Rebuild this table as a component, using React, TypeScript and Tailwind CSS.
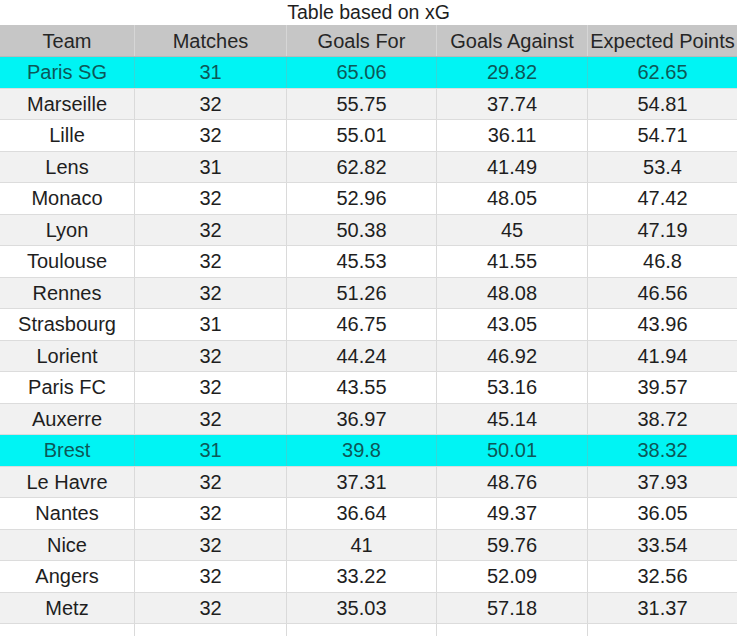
import React from 'react';

type Row = [string, number, number, number, number];

const rows: Row[] = [
  ['Paris SG', 31, 65.06, 29.82, 62.65],
  ['Marseille', 32, 55.75, 37.74, 54.81],
  ['Lille', 32, 55.01, 36.11, 54.71],
  ['Lens', 31, 62.82, 41.49, 53.4],
  ['Monaco', 32, 52.96, 48.05, 47.42],
  ['Lyon', 32, 50.38, 45, 47.19],
  ['Toulouse', 32, 45.53, 41.55, 46.8],
  ['Rennes', 32, 51.26, 48.08, 46.56],
  ['Strasbourg', 31, 46.75, 43.05, 43.96],
  ['Lorient', 32, 44.24, 46.92, 41.94],
  ['Paris FC', 32, 43.55, 53.16, 39.57],
  ['Auxerre', 32, 36.97, 45.14, 38.72],
  ['Brest', 31, 39.8, 50.01, 38.32],
  ['Le Havre', 32, 37.31, 48.76, 37.93],
  ['Nantes', 32, 36.64, 49.37, 36.05],
  ['Nice', 32, 41, 59.76, 33.54],
  ['Angers', 32, 33.22, 52.09, 32.56],
  ['Metz', 32, 35.03, 57.18, 31.37],
];

const highlighted = ['Paris SG', 'Brest'];
const headers = ['Team', 'Matches', 'Goals For', 'Goals Against', 'Expected Points'];
const cols = 'grid grid-cols-[135px_152px_150px_151px_149px]';

const App: React.FC = () => {
  return (
    <div className="w-[737px] h-[636px] overflow-hidden bg-white font-['Liberation_Sans',Arial,sans-serif]">
      <div className="h-[25px] flex items-center justify-center text-[19.5px] text-[#1e1e1e]">
        Table based on xG
      </div>

      <div className={`${cols} h-[32px] bg-[#c6c6c6] border-b border-[#b8b8b8]`}>
        {headers.map((h) => (
          <div
            key={h}
            className="flex items-center justify-center text-[20px] text-[#262626] border-r border-[#d6d6d6] last:border-r-0 whitespace-nowrap"
          >
            {h}
          </div>
        ))}
      </div>

      {rows.map((r, i) => {
        const hi = highlighted.includes(r[0]);
        const bg = hi ? 'bg-[#00f4f4]' : i % 2 === 1 ? 'bg-[#f1f1f1]' : 'bg-white';
        const text = hi ? 'text-[#0c5858]' : 'text-[#1e1e1e]';
        return (
          <div key={r[0]} className={`${cols} h-[31.5px] border-b border-[#dcdcdc] ${bg} ${text}`}>
            {r.map((c, j) => (
              <div
                key={j}
                className={`flex items-center justify-center text-[20px] border-r last:border-r-0 whitespace-nowrap ${
                  hi ? 'border-[#34d8d8]' : 'border-[#dadada]'
                }`}
              >
                {c}
              </div>
            ))}
          </div>
        );
      })}

      <div className={`${cols} h-[14px] bg-white`}>
        {headers.map((h) => (
          <div key={h} className="border-r border-[#dadada] last:border-r-0" />
        ))}
      </div>
    </div>
  );
};

export default App;
